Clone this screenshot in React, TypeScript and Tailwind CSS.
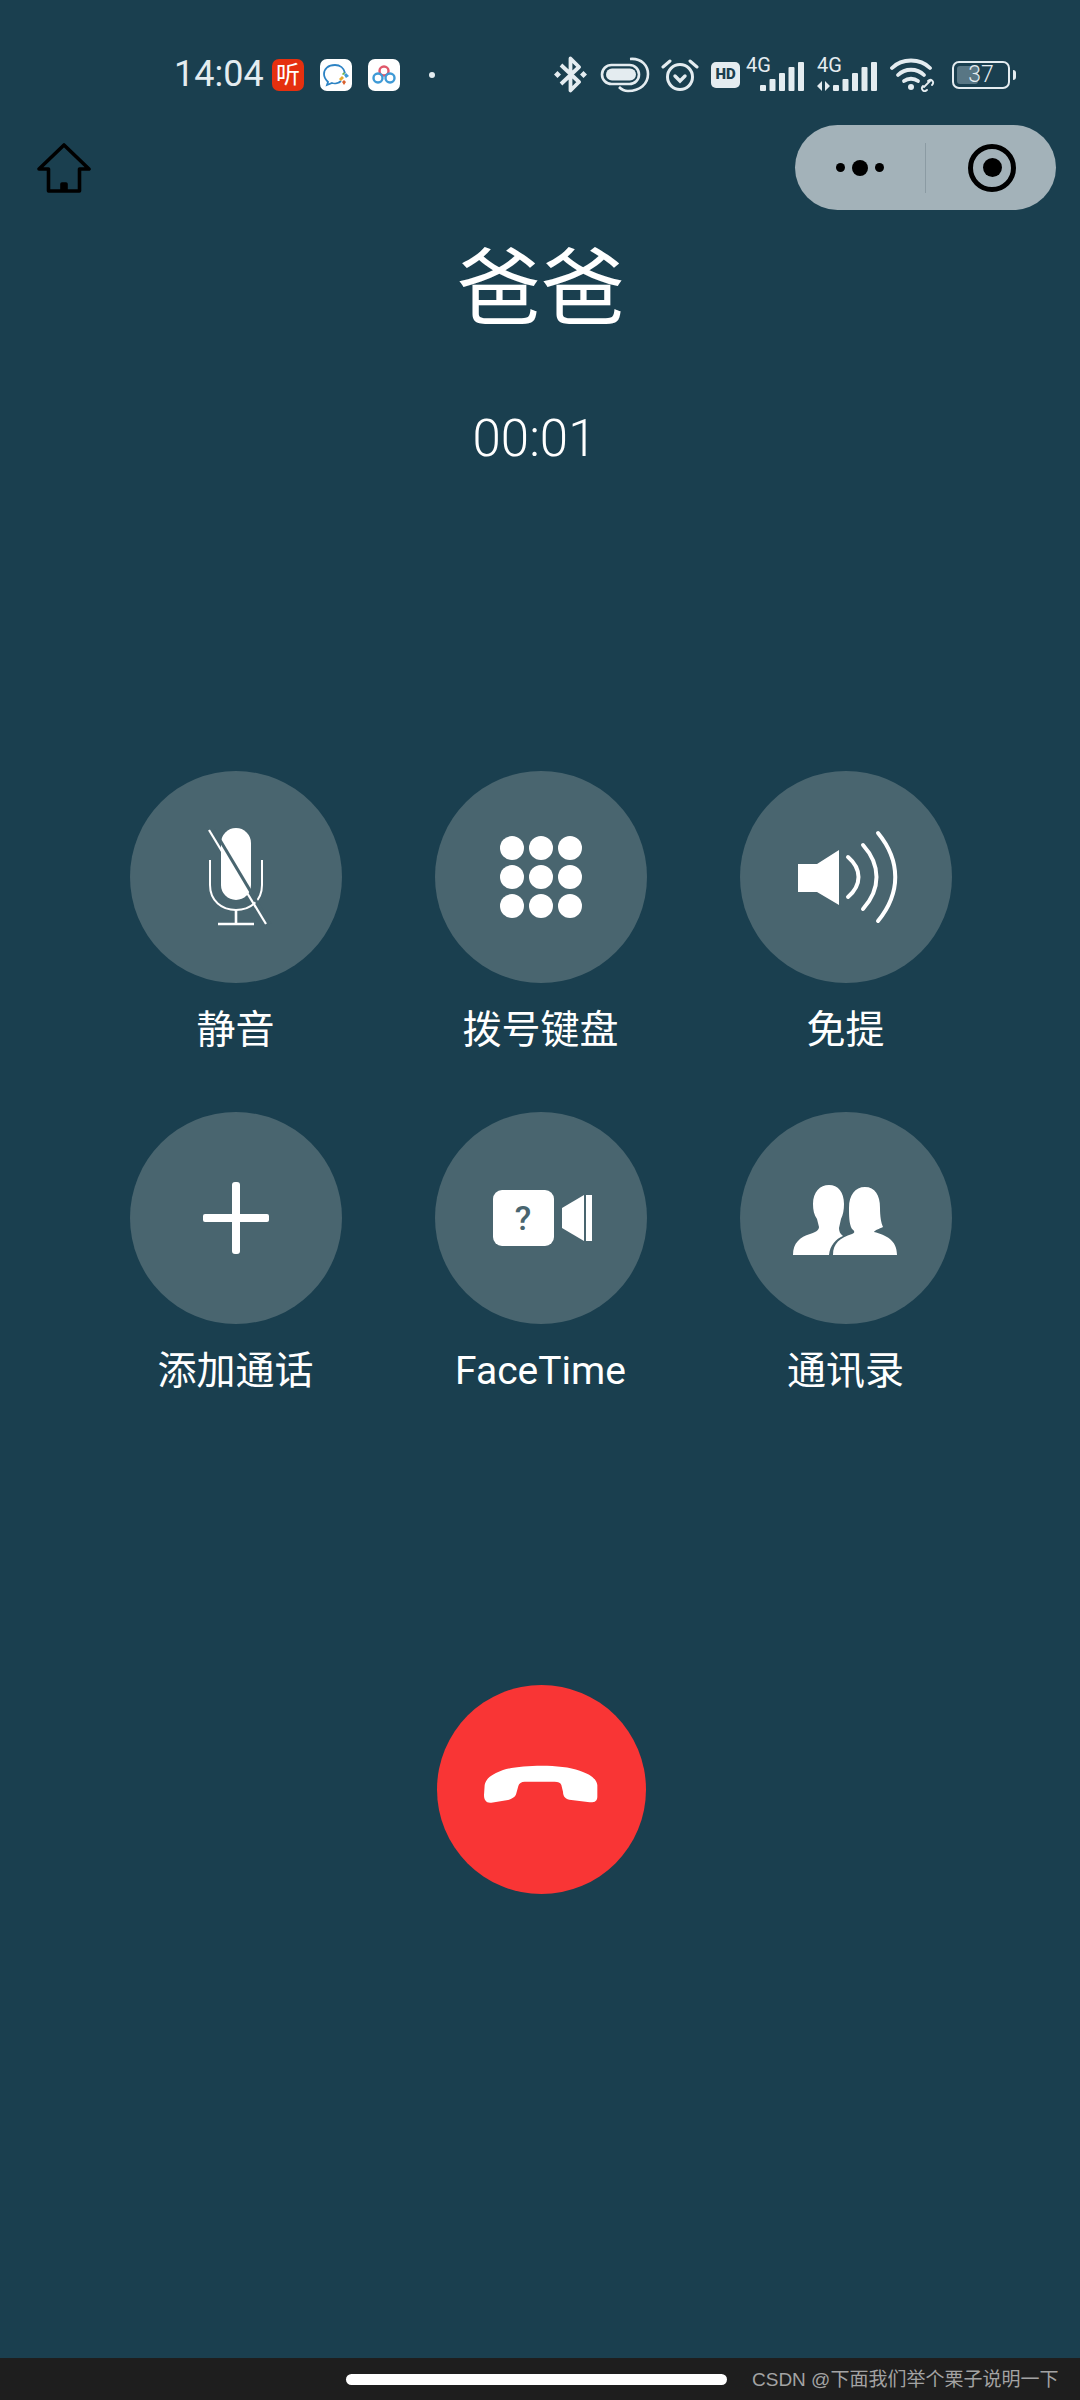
const cjk = "font-['Roboto','Noto_Sans_CJK_SC',sans-serif]";

function BluetoothIcon() {
  return (
    <svg width="33" height="37" viewBox="0 0 33 37" fill="none" stroke="#e4ecf0" strokeWidth="3.8">
      <path d="M7 9 L25 26 L16.5 34.5 V2.5 L25 11 L7 28" strokeLinejoin="round" />
      <path d="M0 18.5 L3.5 15 L7 18.5 L3.5 22 Z M26 18.5 L29.5 15 L33 18.5 L29.5 22 Z" fill="#e4ecf0" stroke="none" />
    </svg>
  );
}

function EarbudIcon() {
  return (
    <svg width="50" height="36" viewBox="0 0 50 36" fill="none" stroke="#e4ecf0">
      <rect x="2" y="8" width="37" height="19" rx="9.5" strokeWidth="2.6" />
      <rect x="6" y="11.5" width="30" height="12" rx="6" fill="#e4ecf0" stroke="none" />
      <path d="M30 2 C42 1 48 9 48 17 C48 27 40 34 28 34 C24 34 21 32 19 30" strokeWidth="2.6" />
    </svg>
  );
}

function AlarmIcon() {
  return (
    <svg width="38" height="34" viewBox="0 0 38 34" fill="none" stroke="#e4ecf0" strokeLinecap="round">
      <circle cx="19" cy="19" r="12.5" strokeWidth="3" />
      <path d="M14 18 L19 23 L24 18" strokeWidth="3.4" />
      <path d="M2 9 L9 3 M36 9 L29 3" strokeWidth="3" />
    </svg>
  );
}

function SignalIcon({ arrows, width }: { arrows?: boolean; width: number }) {
  const start = arrows ? 16 : 14;
  const bars = [6, 12, 18, 24, 29];
  return (
    <div className="relative h-[34px]" style={{ width }}>
      <span className="absolute left-0 top-[-4px] font-['Roboto',sans-serif] text-[20px] leading-[22px] text-[#e4ecf0]">4G</span>
      <svg width={width} height="34" viewBox={`0 0 ${width} 34`} fill="#e4ecf0" className="absolute left-0 top-0">
        {bars.map((h, i) => (
          <rect key={h} x={start + i * 9.5} y={33 - h} width="6" height={h} rx="1" />
        ))}
        {arrows && <path d="M0 28 L5 23 V33 Z M8 33 V23 L13 28 Z" />}
      </svg>
    </div>
  );
}

function WifiIcon() {
  return (
    <svg width="48" height="34" viewBox="0 0 48 34" fill="none" stroke="#e4ecf0" strokeWidth="3.8" strokeLinecap="round">
      <path d="M2 10 C12 0 30 0 40 10" />
      <path d="M8 17 C15 10 27 10 34 17" />
      <path d="M14 23 C18 20 24 20 28 23" />
      <circle cx="21" cy="29" r="3" fill="#e4ecf0" stroke="none" />
      <path d="M34 29 L41 22 M37 32 C34 35 30 31 33 28 M38 23 C41 20 45 24 42 27" strokeWidth="1.8" />
    </svg>
  );
}

function BatteryIcon() {
  return (
    <div className="flex items-center gap-[3px]">
      <div className="relative flex h-[28px] w-[58px] items-center rounded-[7px] border-[2px] border-[#e4ecf0] p-[3px]">
        <div className="h-full w-[21px] rounded-[3px] bg-[#587684]" />
        <span className="absolute inset-0 text-center font-['Roboto',sans-serif] text-[23px] font-light leading-[24px] text-[#e4ecf0]">37</span>
      </div>
      <div className="h-[10px] w-[3px] rounded-r-sm bg-[#e4ecf0]" />
    </div>
  );
}

function WeComIcon() {
  return (
    <svg width="32" height="32" viewBox="0 0 32 32" fill="none">
      <rect width="32" height="32" rx="7" fill="#fff" />
      <path d="M15 6 C8 6 4 10 4 15 C4 19 7 22 8 23 L7 26 L12 24 C15 25 19 24 21 22" stroke="#2d83c4" strokeWidth="1.8" />
      <path d="M15 6 C20 6 24 9 25 14" stroke="#2d83c4" strokeWidth="1.8" />
      <path d="M19 20 L22 17 L24 19 L21 22 Z" fill="#e6a92d" />
      <path d="M24 16 L26 14 L29 17 L26 19 Z" fill="#3f9ad6" />
      <path d="M22 23 L24 21 L26 23 L24 26 Z" fill="#d9602e" />
      <path d="M22 15 L24 13 L25 15 L23 16 Z" fill="#68b34c" />
    </svg>
  );
}

function NetdiskIcon() {
  return (
    <svg width="32" height="32" viewBox="0 0 32 32" fill="none" strokeWidth="2.4">
      <rect width="32" height="32" rx="7" fill="#fff" />
      <circle cx="16" cy="12" r="4.5" stroke="#e0576a" />
      <circle cx="10" cy="19" r="4.5" stroke="#3f9ad6" />
      <circle cx="22" cy="19" r="4.5" stroke="#3f9ad6" />
    </svg>
  );
}

function HomeIcon() {
  return (
    <svg width="54" height="50" viewBox="0 0 54 50" fill="none" stroke="#000" strokeWidth="3.6" strokeLinejoin="round">
      <path d="M2 26 L27 2 L52 26 H42.5 V48 H11.5 V26 Z" />
      <path d="M25 48 V41 H29 V48" fill="#000" />
    </svg>
  );
}

function MuteIcon() {
  return (
    <svg width="212" height="212" viewBox="-106 -106 212 212" fill="none">
      <rect x="-15" y="-49" width="30" height="72" rx="15" fill="#fff" />
      <path d="M-26 -17 V8 C-26 24 -14 33 0 33 C14 33 26 24 26 8 V-17" stroke="#fff" strokeWidth="2" />
      <path d="M0 33 V47 M-18 47 H18" stroke="#fff" strokeWidth="2.6" />
      <path d="M-22 -47 L34 47" stroke="#49656f" strokeWidth="3" />
      <path d="M-27 -47 L30 47" stroke="#fff" strokeWidth="2.2" />
    </svg>
  );
}

function KeypadIcon() {
  const offsets = [-29, 0, 29];
  return (
    <svg width="212" height="212" viewBox="-106 -106 212 212" fill="#fff">
      {offsets.map((y) => offsets.map((x) => <circle key={`${x}${y}`} cx={x} cy={y} r="12" />))}
    </svg>
  );
}

function SpeakerIcon() {
  return (
    <svg width="212" height="212" viewBox="-106 -106 212 212" fill="none">
      <path d="M-48 -13 H-29 L-7 -27 V28 L-29 15 H-48 Z" fill="#fff" />
      <path d="M2 -20 C16 -8 16 8 2 20" stroke="#fff" strokeWidth="4" strokeLinecap="round" />
      <path d="M17 -32 C35 -12 35 12 17 32" stroke="#fff" strokeWidth="4" strokeLinecap="round" />
      <path d="M32 -44 C55 -16 55 16 32 44" stroke="#fff" strokeWidth="4" strokeLinecap="round" />
    </svg>
  );
}

function PlusIcon() {
  return (
    <svg width="212" height="212" viewBox="-106 -106 212 212" fill="#fff">
      <rect x="-33" y="-4" width="66" height="8" rx="2" />
      <rect x="-4" y="-36" width="8" height="72" rx="3" />
    </svg>
  );
}

function FaceTimeIcon() {
  return (
    <div className="relative h-[212px] w-[212px]">
      <svg width="212" height="212" viewBox="-106 -106 212 212" fill="#fff">
        <rect x="-48" y="-28" width="61" height="56" rx="9" />
        <path d="M21 -10 L43 -23 V23 L21 10 Z" />
        <rect x="45" y="-23" width="6" height="46" />
      </svg>
      <span className="absolute left-[58px] top-[82px] w-[61px] text-center font-['Roboto',sans-serif] text-[34px] font-medium leading-[48px] text-[#49656f]">?</span>
    </div>
  );
}

function ContactsIcon() {
  return (
    <svg width="212" height="212" viewBox="-106 -106 212 212" fill="#fff">
      <path d="M-17 -33 C-8 -33 -2 -26 -2 -14 C-2 -8 -3 -3 -5 1 L-7 10 C-7 13 -6 16 -3 18 C-10 21 -16 27 -17 37 H-53 C-53 25 -46 19 -36 16 C-30 14 -27 12 -27 9 L-29 1 C-32 -3 -33 -8 -33 -14 C-33 -26 -26 -33 -17 -33 Z" />
      <path d="M19 -31 C29 -31 34 -23 34 -10 C34 -2 35 5 37 9 C33 11 29 12 28 14 C40 17 51 22 51 37 H-13 C-13 25 -6 20 6 16 C9 15 9 13 6 11 C3 6 3 -3 3 -10 C3 -23 9 -31 19 -31 Z" />
    </svg>
  );
}

const buttons = [
  { label: "静音", icon: <MuteIcon /> },
  { label: "拨号键盘", icon: <KeypadIcon /> },
  { label: "免提", icon: <SpeakerIcon /> },
  { label: "添加通话", icon: <PlusIcon /> },
  { label: "FaceTime", icon: <FaceTimeIcon /> },
  { label: "通讯录", icon: <ContactsIcon /> },
];

export default function App() {
  return (
    <div className={`flex h-[2400px] w-[1080px] flex-col bg-[#1a3f4f] ${cjk}`}>
      {/* Status bar */}
      <div className="flex h-[125px] items-start justify-between pl-[174px] pr-[64px] pt-[56px]">
        <div className="flex h-[37px] items-center">
          <span className="w-[98px] text-[36px] leading-[37px] text-[#e4ecf0]">14:04</span>
          <div className="flex h-[32px] w-[32px] items-center justify-center rounded-[7px] bg-[#e5300f] text-[24px] leading-none text-white">听</div>
          <div className="ml-[16px]"><WeComIcon /></div>
          <div className="ml-[16px]"><NetdiskIcon /></div>
          <div className="ml-[29px] h-[6px] w-[6px] rounded-full bg-[#e4ecf0]" />
        </div>
        <div className="flex h-[37px] items-center">
          <BluetoothIcon />
          <div className="ml-[13px]"><EarbudIcon /></div>
          <div className="ml-[11px]"><AlarmIcon /></div>
          <div className="ml-[12px] flex h-[26px] w-[29px] items-center justify-center rounded-[5px] bg-[#e4ecf0] font-['Roboto',sans-serif] text-[15px] font-black leading-none text-[#1a3f4f]">HD</div>
          <div className="ml-[6px]"><SignalIcon width={59} /></div>
          <div className="ml-[12px]"><SignalIcon arrows width={61} /></div>
          <div className="ml-[12px]"><WifiIcon /></div>
          <div className="ml-[14px]"><BatteryIcon /></div>
        </div>
      </div>

      {/* Nav row */}
      <div className="flex h-[85px] items-center justify-between pl-[37px] pr-[24px]">
        <HomeIcon />
        <div className="flex h-[85px] w-[261px] items-center rounded-full bg-[#a3b2b9]">
          <div className="flex w-[130px] items-center justify-center gap-[7px]">
            <div className="h-[9px] w-[9px] rounded-full bg-black" />
            <div className="h-[16px] w-[16px] rounded-full bg-black" />
            <div className="h-[9px] w-[9px] rounded-full bg-black" />
          </div>
          <div className="h-[50px] w-[1px] bg-[#8b9ba3]" />
          <div className="flex flex-1 items-center justify-center pl-[2px]">
            <div className="flex h-[48px] w-[48px] items-center justify-center rounded-full border-[5px] border-black">
              <div className="h-[19px] w-[19px] rounded-full bg-black" />
            </div>
          </div>
        </div>
      </div>

      {/* Caller */}
      <div className="mt-[30px] pl-[2px] text-center text-[84px] leading-[100px] text-white">爸爸</div>
      <div className="mt-[69px] pr-[11px] text-center text-[51px] font-light leading-[60px] text-white">00:01</div>

      {/* Call actions */}
      <div className="ml-[83px] mt-[302px] grid w-[915px] grid-cols-3 gap-y-[57px]">
        {buttons.map((b) => (
          <div key={b.label} className="flex flex-col items-center">
            <div className="h-[212px] w-[212px] rounded-full bg-[#49656f]">{b.icon}</div>
            <div className="mt-[22px] text-[39px] leading-[50px] text-white">{b.label}</div>
          </div>
        ))}
      </div>

      {/* Hang up */}
      <div className="mt-[289px] flex justify-center pl-[2px]">
        <div className="h-[209px] w-[209px] rounded-full bg-[#f93535]">
          <svg width="209" height="209" viewBox="52 45 627 627" fill="#fff">
            <path d="M195 345 C200 320 225 310 250 300 C300 285 420 280 480 302 C510 312 530 325 533 345 L533 380 C533 392 525 398 510 397 L455 390 C438 388 430 380 430 365 L425 345 C423 338 415 335 405 335 L315 335 C305 335 298 340 296 348 L290 370 C288 380 280 386 265 390 L215 398 C200 400 193 390 193 375 Z" />
          </svg>
        </div>
      </div>

      {/* Gesture bar */}
      <div className="mt-auto flex h-[42px] items-center bg-[#1e1e1e] pl-[346px]">
        <div className="h-[11px] w-[381px] rounded-full bg-white" />
        <span className="ml-[25px] whitespace-nowrap font-['Liberation_Sans','Noto_Sans_CJK_SC',sans-serif] text-[19px] leading-none text-[#a3a3a3]">CSDN @下面我们举个栗子说明一下</span>
      </div>
    </div>
  );
}
